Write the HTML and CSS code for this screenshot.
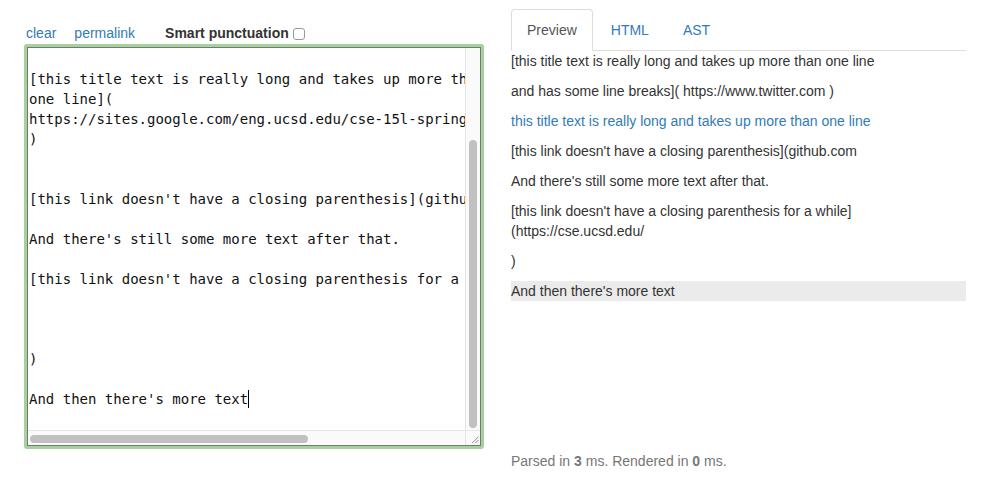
FILE: index.html
```html
<!DOCTYPE html>
<html lang="en">
<head>
<meta charset="utf-8">
<title>commonmark.js demo</title>
<link rel="stylesheet" href="styles.css">
</head>
<body>
<div class="page">
  <div class="left">
    <div class="toolbar">
      <a class="link link-clear" href="#">clear</a>
      <a class="link link-perma" href="#">permalink</a>
      <label class="smart">Smart punctuation <span class="checkbox"></span></label>
    </div>
    <div class="editor">
      <div class="code"><pre class="code-text">

[this title text is really long and takes up more than
one line](
https://sites.google.com/eng.ucsd.edu/cse-15l-spring-2022
)


[this link doesn't have a closing parenthesis](github.com

And there's still some more text after that.

[this link doesn't have a closing parenthesis for a while]



)

And then there's more text<span class="caret"></span>
</pre></div>
      <div class="vscroll"><div class="vthumb"></div></div>
      <div class="hscroll"><div class="hthumb"></div></div>
      <div class="corner">
        <svg width="15" height="15" viewBox="0 0 15 15"><path d="M13.5 6.5 L6.5 13.5 M13.5 10 L10 13.5" stroke="#8a8a8a" stroke-width="1" fill="none"/></svg>
      </div>
    </div>
  </div>
  <div class="right">
    <ul class="tabs">
      <li class="tab active"><a href="#">Preview</a></li>
      <li class="tab"><a href="#">HTML</a></li>
      <li class="tab"><a href="#">AST</a></li>
    </ul>
    <div class="preview">
      <p>[this title text is really long and takes up more than one line</p>
      <p>and has some line breaks]( https://www.twitter.com )</p>
      <p><a href="#">this title text is really long and takes up more than one line</a></p>
      <p>[this link doesn't have a closing parenthesis](github.com</p>
      <p>And there's still some more text after that.</p>
      <p>[this link doesn't have a closing parenthesis for a while] (https://cse.ucsd.edu/</p>
      <p>)</p>
      <p class="current">And then there's more text</p>
    </div>
    <div class="timing">Parsed in <strong>3</strong> ms. Rendered in <strong>0</strong> ms.</div>
  </div>
</div>
</body>
</html>
```
FILE: styles.css
```css
* { box-sizing: border-box; }
html, body { margin: 0; padding: 0; background: #fff; }
body {
  font-family: "Liberation Sans", Arial, Helvetica, sans-serif;
  font-size: 14px;
  line-height: 20px;
  color: #333;
}
a { color: #337ab7; text-decoration: none; }

.page {
  display: flex;
  align-items: flex-start;
  padding: 9px 0 0 24px;
  gap: 27px;
}

.left { width: 460px; padding-top: 14px; }

.toolbar {
  display: flex;
  align-items: center;
  height: 21px;
  padding-left: 2px;
  padding-bottom: 1px;
}
.link-clear { margin-right: 18px; }
.link-perma { margin-right: 30px; }
.smart {
  font-weight: bold;
  color: #333;
  display: flex;
  align-items: center;
}
.checkbox {
  display: inline-block;
  width: 12px;
  height: 12px;
  margin-left: 4px;
  margin-top: 1px;
  border: 1px solid #9a9a9a;
  border-radius: 3px;
  background: #fff;
}

.editor {
  width: 460px;
  height: 405px;
  border: 3px solid #a3d39b;
  border-radius: 3px;
  box-shadow: inset 0 0 0 1px #767676;
  padding: 1px;
  display: grid;
  grid-template-columns: 1fr 15px;
  grid-template-rows: 1fr 15px;
  overflow: hidden;
}
.code { overflow: hidden; background: #fff; }
.code-text {
  margin: 0;
  padding: 1px 0 0 1px;
  font-family: "DejaVu Sans Mono", Menlo, monospace;
  font-size: 14px;
  line-height: 20px;
  color: #111;
  white-space: pre;
}
.caret {
  display: inline-block;
  width: 0;
  height: 18px;
  border-right: 1px solid #000;
  vertical-align: -4px;
}
.vscroll {
  background: #fafafa;
  border-left: 1px solid #e6e6e6;
  padding: 92px 0 0 3px;
}
.vthumb {
  width: 8px;
  height: 288px;
  border-radius: 4px;
  background: #c1c1c1;
}
.hscroll {
  background: #fafafa;
  border-top: 1px solid #e6e6e6;
  padding: 4px 0 0 2px;
}
.hthumb {
  width: 278px;
  height: 8px;
  border-radius: 4px;
  background: #c1c1c1;
}
.corner {
  background: #fafafa;
  border-top: 1px solid #e6e6e6;
  border-left: 1px solid #e6e6e6;
  display: flex;
  align-items: flex-end;
  justify-content: flex-end;
}
.corner svg { display: block; }

.right { width: 455px; }

.tabs {
  list-style: none;
  margin: 0;
  padding: 0;
  display: flex;
  border-bottom: 1px solid #ddd;
}
.tab { margin-right: 2px; margin-bottom: -1px; }
.tab a {
  display: block;
  padding: 10px 15px;
  line-height: 20px;
  border: 1px solid transparent;
  border-radius: 4px 4px 0 0;
}
.tab.active a {
  color: #555;
  background: #fff;
  border-color: #ddd #ddd transparent;
}

.preview { height: 400px; }
.preview p { margin: 0 0 10px; }
.preview p.current { background: #ebebeb; }

.timing { color: #777; }
.timing strong { color: #777; }
```
